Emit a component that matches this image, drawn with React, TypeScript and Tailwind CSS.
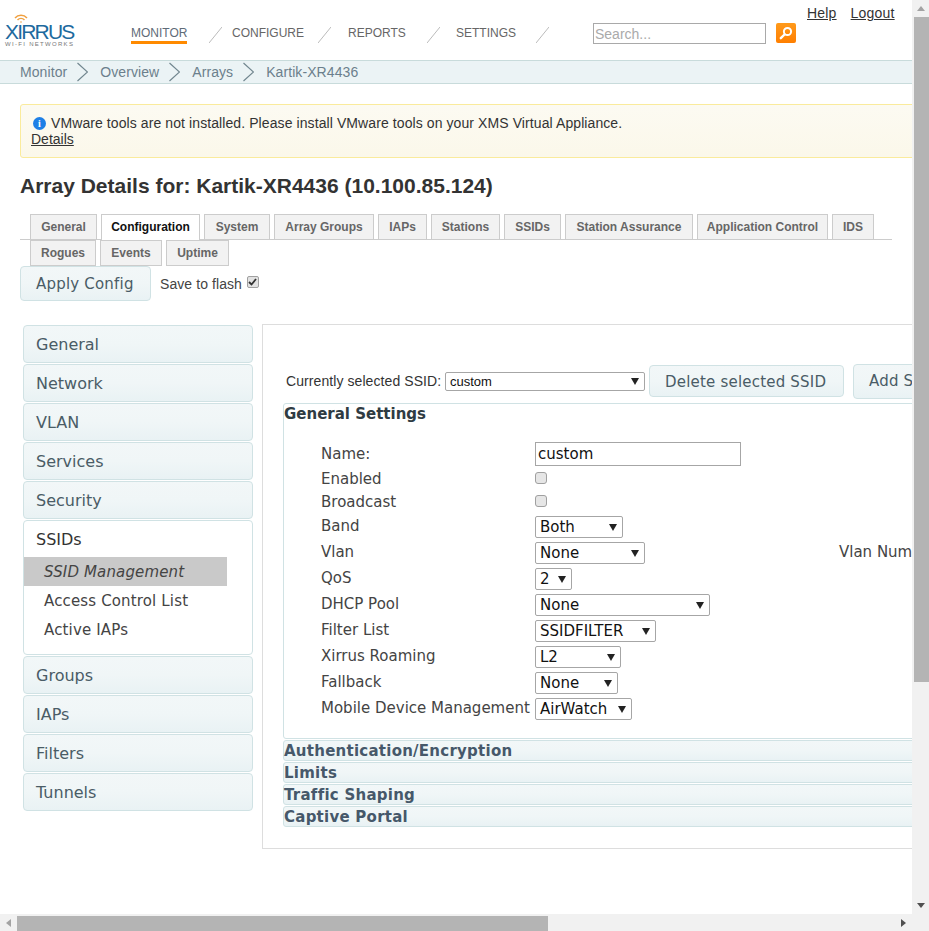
const VERDANA = "font-['DejaVu_Sans',Verdana,sans-serif]";
const BTN_BG = "bg-gradient-to-b from-[#f2f7f8] via-[#f0f6f7] to-[#e9f2f4]";

const topTabs = [
  { label: "General", w: 67 },
  { label: "Configuration", w: 99, active: true },
  { label: "System", w: 66 },
  { label: "Array Groups", w: 100 },
  { label: "IAPs", w: 49 },
  { label: "Stations", w: 69 },
  { label: "SSIDs", w: 57 },
  { label: "Station Assurance", w: 128 },
  { label: "Application Control", w: 131 },
  { label: "IDS", w: 42 },
];
const lowerTabs = [
  { label: "Rogues", w: 66 },
  { label: "Events", w: 62 },
  { label: "Uptime", w: 63 },
];

function Logo() {
  return (
    <div className="w-[131px] pl-[5px] pt-[14px] shrink-0">
      <svg width="14" height="9" viewBox="0 0 14 9" className="ml-[9px] block" fill="none" stroke="#f0a040" strokeWidth="1.5">
        <path d="M1 4 A8 8 0 0 1 13 4" />
        <path d="M3.5 6 A5 5 0 0 1 10.500 6" />
        <circle cx="7" cy="8" r="0.8" fill="#f0a040" stroke="none" />
      </svg>
      <div className="text-[21px] leading-[17px] tracking-[-1.8px] text-[#1d6a9e]">XIRRUS</div>
      <div className="text-[6px] leading-[7px] tracking-[1.3px] text-[#777] mt-[1px] whitespace-nowrap">WI-FI NETWORKS</div>
    </div>
  );
}

function NavSlash({ className }: { className: string }) {
  return (
    <svg width="13" height="16" viewBox="0 0 13 16" className={`shrink-0 mt-[27px] ${className}`}>
      <line x1="0" y1="16" x2="13" y2="0" stroke="#bbbbbb" strokeWidth="1" />
    </svg>
  );
}

function Header() {
  return (
    <div className="flex h-[60px] items-start text-xs text-[#666]">
      <Logo />
      <div className="mt-[26px] h-[18px] leading-[14px] border-b-[3px] border-[#ff8a00] w-[56px] text-[#5f6b78]">MONITOR</div>
      <NavSlash className="ml-[22px]" />
      <div className="mt-[26px] ml-[10px] leading-[14px] w-[72px]">CONFIGURE</div>
      <NavSlash className="ml-[14px]" />
      <div className="mt-[26px] ml-[17px] leading-[14px] w-[58px]">REPORTS</div>
      <NavSlash className="ml-[21px]" />
      <div className="mt-[26px] ml-[16px] leading-[14px] w-[59px]">SETTINGS</div>
      <NavSlash className="ml-[21px]" />
      <input
        readOnly
        placeholder="Search..."
        className="ml-[44px] mt-[23px] w-[173px] h-[21px] border border-[#a9a9a9] px-[1px] text-[14px] placeholder:text-[#aaa] outline-none"
      />
      <div className="ml-[10px] mt-[23px] w-[20px] h-[20px] rounded-[2px] bg-gradient-to-b from-[#ff9a1a] to-[#ff7f00] flex items-center justify-center">
        <svg width="14" height="14" viewBox="0 0 14 14" fill="none" stroke="#fff">
          <circle cx="8.500" cy="5.500" r="3.600" strokeWidth="2" />
          <line x1="5.500" y1="8.500" x2="1.800" y2="12.200" strokeWidth="2.400" strokeLinecap="round" />
        </svg>
      </div>
      <a className="ml-[11px] mt-[5px] text-sm leading-4 underline text-[#333] tracking-[0.2px]">Help</a>
      <a className="ml-[14px] mt-[5px] text-sm leading-4 underline text-[#333] tracking-[0.2px]">Logout</a>
    </div>
  );
}

function Breadcrumb() {
  const crumbs = ["Monitor", "Overview", "Arrays"];
  return (
    <div className="flex items-center h-[24px] bg-[#ebf3f5] border-y border-[#c8dbdb] pl-[20px] text-sm text-[#6b7f8c] tracking-[0.08px]">
      {crumbs.map((c) => (
        <div key={c} className="flex items-center">
          <span>{c}</span>
          <svg width="11" height="20" viewBox="0 0 11 20" fill="none" stroke="#71868f" strokeWidth="1.200" className="ml-[10px] mr-[12px]">
            <path d="M0.500 1 L10.500 10 L0.500 19" />
          </svg>
        </div>
      ))}
      <span>Kartik-XR4436</span>
    </div>
  );
}

function Alert() {
  return (
    <div className="mt-[20px] ml-[20px] w-[1480px] h-[54px] rounded-[3px] border border-[#faeb9c] bg-gradient-to-b from-[#fcfaf2] to-[#fbf8ea] pl-[10px] pt-[10px] text-sm leading-[16px] text-[#333]">
      <div className="flex items-center tracking-[0.09px]">
        <span className="w-[13px] h-[13px] rounded-full bg-[#1e7fe6] text-white text-[10px] leading-[13px] font-bold text-center mr-[5px] ml-[2px] font-['Liberation_Serif',serif]">i</span>
        VMware tools are not installed. Please install VMware tools on your XMS Virtual Appliance.
      </div>
      <a className="underline block">Details</a>
    </div>
  );
}

function Tab({ label, w, active }: { label: string; w: number; active?: boolean }) {
  return (
    <div
      style={{ width: w }}
      className={`h-[26px] shrink-0 border-[#ccc] text-center text-xs leading-[24px] font-bold ${
        active ? "bg-white text-[#111] border border-b-0 pb-px" : "bg-[#f2f2f2] text-[#666] border"
      }`}
    >
      {label}
    </div>
  );
}

function Tabs() {
  return (
    <div className="ml-[20px] w-[872px]">
      <div className="flex gap-[4px] pl-[10px] h-[26px] border-b border-[#ccc]">
        {topTabs.map((t) => (
          <Tab key={t.label} {...t} />
        ))}
      </div>
      <div className="flex gap-[4px] pl-[10px]">
        {lowerTabs.map((t) => (
          <Tab key={t.label} {...t} />
        ))}
      </div>
    </div>
  );
}

function ConfigButton({ label, className }: { label: string; className: string }) {
  return (
    <button className={`${VERDANA} ${BTN_BG} shrink-0 border border-[#d0e2e4] rounded-[4px] text-[15px] text-[#4a5c66] tracking-[0.2px] text-left ${className}`}>
      {label}
    </button>
  );
}

function SideItem({ label }: { label: string }) {
  return (
    <div className={`${BTN_BG} h-[38px] border border-[#d0e2e4] rounded-[4px] pl-[12px] pt-px text-[16px] leading-[36px] text-[#4a5c66]`}>
      {label}
    </div>
  );
}

function Sidebar() {
  return (
    <div className={`${VERDANA} w-[230px] ml-[23px] shrink-0 flex flex-col gap-[1px] mt-[1px]`}>
      {["General", "Network", "VLAN", "Services", "Security"].map((s) => (
        <SideItem key={s} label={s} />
      ))}
      <div className="h-[135px] border border-[#d0e2e4] rounded-[4px] bg-white">
        <div className="h-[36px] pl-[12px] pt-px text-[16px] leading-[36px] text-[#333]">SSIDs</div>
        <div className="w-[203px] h-[29px] bg-[#c9c9c9] pl-[20px] pt-px text-[15px] leading-[29px] italic text-[#444] tracking-[0.15px]">SSID Management</div>
        <div className="h-[29px] pl-[20px] pt-px text-[15px] leading-[29px] text-[#444] tracking-[0.15px]">Access Control List</div>
        <div className="h-[29px] pl-[20px] pt-px text-[15px] leading-[29px] text-[#444] tracking-[0.15px]">Active IAPs</div>
      </div>
      {["Groups", "IAPs", "Filters", "Tunnels"].map((s) => (
        <SideItem key={s} label={s} />
      ))}
    </div>
  );
}

function Arrow() {
  return (
    <svg width="8" height="7" viewBox="0 0 8 7" className="shrink-0">
      <path d="M0 0 H8 L4 7 Z" fill="#222" />
    </svg>
  );
}

function Select({ value, w }: { value: string; w: number }) {
  return (
    <div
      style={{ width: w }}
      className="h-[22px] border border-[#a6a6a6] rounded-[2px] bg-white pl-[4px] pr-[5px] flex items-center justify-between text-[15px] text-[#111]"
    >
      <span>{value}</span>
      <Arrow />
    </div>
  );
}

function Check() {
  return <input type="checkbox" readOnly className="appearance-none block w-[12px] h-[12px] rounded-[3px] border border-[#a0a0a0] bg-[#e6e6e6] mb-[2px]" />;
}

const formRows = [
  { label: "Enabled", h: "h-[23px]", lift: "pt-[2px]", control: <Check /> },
  { label: "Broadcast", h: "h-[24px]", lift: "", control: <Check /> },
  { label: "Band", h: "h-[26px]", lift: "pb-[2px]", control: <Select value="Both" w={88} /> },
  { label: "Vlan", h: "h-[26px]", lift: "pb-[2px]", control: <Select value="None" w={110} />, extra: "Vlan Number" },
  { label: "QoS", h: "h-[26px]", lift: "pb-[2px]", control: <Select value="2" w={37} /> },
  { label: "DHCP Pool", h: "h-[26px]", lift: "pb-[2px]", control: <Select value="None" w={175} /> },
  { label: "Filter List", h: "h-[26px]", lift: "pb-[2px]", control: <Select value="SSIDFILTER" w={121} /> },
  { label: "Xirrus Roaming", h: "h-[26px]", lift: "pb-[2px]", control: <Select value="L2" w={86} /> },
  { label: "Fallback", h: "h-[26px]", lift: "pb-[2px]", control: <Select value="None" w={83} /> },
  { label: "Mobile Device Management", h: "h-[26px]", lift: "pb-[2px]", control: <Select value="AirWatch" w={97} /> },
];

function GeneralSettings() {
  return (
    <div className="ml-[20px] h-[336px] border border-[#d0e2e4] rounded-[3px]">
      <div className="h-[21px] font-bold text-[15px] leading-[21px] text-[#2f3b42]">General Settings</div>
      <div className="pl-[37px] pt-[16px] text-[15px] text-[#444]">
        <div className="flex h-[26px] items-center">
          <div className="w-[214px] shrink-0">Name:</div>
          <input readOnly value="custom" className="w-[206px] h-[24px] border border-[#a6a6a6] px-[2px] text-[15px] text-[#111] outline-none font-[inherit]" />
        </div>
        {formRows.map((r) => (
          <div key={r.label} className={`flex items-center ${r.h}`}>
            <div className={`w-[214px] shrink-0 whitespace-nowrap ${r.lift}`}>{r.label}</div>
            <div className="w-[304px] shrink-0">{r.control}</div>
            {r.extra && <div className={`whitespace-nowrap ${r.lift}`}>{r.extra}</div>}
          </div>
        ))}
      </div>
    </div>
  );
}

function CollapsedSection({ label }: { label: string }) {
  return (
    <div className={`${BTN_BG} ml-[20px] mt-[1px] h-[21px] border border-[#d0e2e4] rounded-[3px] pt-[1px] font-bold text-[15px] leading-[18px] text-[#46586a] tracking-[0.25px]`}>
      {label}
    </div>
  );
}

function Panel() {
  return (
    <div className={`${VERDANA} ml-[9px] w-[1230px] h-[525px] border border-r-0 border-[#ddd]`}>
      <div className="flex items-start pl-[23px] pt-[39px] h-[78px] font-['Liberation_Sans',Arial,sans-serif]">
        <span className="text-sm leading-4 text-[#333] mt-[9px] w-[159px] shrink-0 tracking-[0.08px]">Currently selected SSID:</span>
        <div className="mt-[8px] w-[200px] h-[19px] border border-[#a6a6a6] rounded-[2px] pl-[4px] pr-[5px] flex items-center justify-between text-[13px] text-[#111]">
          <span>custom</span>
          <Arrow />
        </div>
        <ConfigButton label="Delete selected SSID" className="ml-[4px] mt-[1px] w-[195px] h-[32px] pl-[15px] pt-[2px]" />
        <ConfigButton label="Add SSID" className="ml-[9px] w-[120px] h-[35px] pl-[15px]" />
      </div>
      <GeneralSettings />
      {["Authentication/Encryption", "Limits", "Traffic Shaping", "Captive Portal"].map((s) => (
        <CollapsedSection key={s} label={s} />
      ))}
    </div>
  );
}

function VerticalScrollbar() {
  return (
    <div className="w-[17px] shrink-0 bg-[#f1f1f1] flex flex-col items-center">
      <div className="h-[17px] shrink-0 flex items-center justify-center">
        <svg width="8" height="5" viewBox="0 0 8 5"><path d="M4 0 L8 5 H0 Z" fill="#a3a3a3" /></svg>
      </div>
      <div className="h-[665px] w-[15px] ml-[2px] bg-[#b4b4b4] shrink-0" />
      <div className="flex-1" />
      <div className="h-[17px] shrink-0 flex items-center justify-center">
        <svg width="8" height="5" viewBox="0 0 8 5"><path d="M0 0 H8 L4 5 Z" fill="#505050" /></svg>
      </div>
    </div>
  );
}

function HorizontalScrollbar() {
  return (
    <div className="h-[17px] shrink-0 bg-[#f1f1f1] flex items-center">
      <div className="w-[17px] flex justify-center">
        <svg width="5" height="8" viewBox="0 0 5 8"><path d="M5 0 V8 L0 4 Z" fill="#a3a3a3" /></svg>
      </div>
      <div className="w-[531px] h-[15px] mt-[2px] bg-[#b4b4b4]" />
      <div className="w-[347px]" />
      <div className="w-[17px] flex justify-center">
        <svg width="5" height="8" viewBox="0 0 5 8"><path d="M0 0 L5 4 L0 8 Z" fill="#505050" /></svg>
      </div>
    </div>
  );
}

export default function App() {
  return (
    <div className="w-[929px] h-[931px] overflow-hidden flex flex-col bg-white font-['Liberation_Sans',Arial,sans-serif]">
      <div className="flex h-[914px]">
        <div className="w-[912px] shrink-0 overflow-hidden">
          <div className="w-[1500px]">
            <Header />
            <Breadcrumb />
            <Alert />
            <h1 className="ml-[20px] mt-[16px] h-[40px] text-[21px] leading-[24px] font-bold text-[#333]">
              Array Details for: Kartik-XR4436 (10.100.85.124)
            </h1>
            <Tabs />
            <div className="flex items-center ml-[20px] h-[35px]">
              <ConfigButton label="Apply Config" className="w-[131px] h-[35px] pl-[15px] pt-[2px]" />
              <span className="ml-[9px] text-sm text-[#444] tracking-[0.08px]">Save to flash</span>
              <span className="ml-[5px] mb-[3px] w-[12px] h-[12px] rounded-[2px] border border-[#a0a0a0] bg-[#e2e2e2] flex items-center justify-center">
                <svg width="9" height="8" viewBox="0 0 9 8" fill="none" stroke="#333" strokeWidth="1.800">
                  <path d="M1 4 L3.500 6.500 L8 1" />
                </svg>
              </span>
            </div>
            <div className="flex mt-[23px]">
              <Sidebar />
              <Panel />
            </div>
          </div>
        </div>
        <VerticalScrollbar />
      </div>
      <HorizontalScrollbar />
    </div>
  );
}
